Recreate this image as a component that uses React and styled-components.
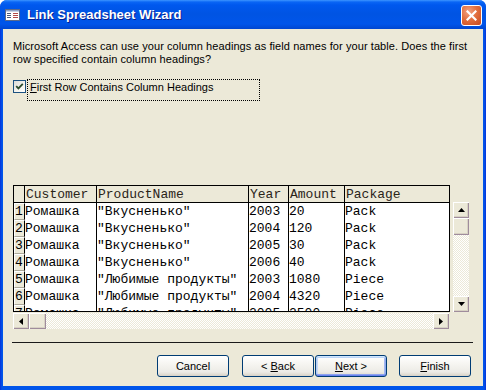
import React from "react";
import styled, { createGlobalStyle } from "styled-components";

const GlobalStyle = createGlobalStyle`
  html, body { margin: 0; padding: 0; background: #ffffff; }
  body { font-family: "Liberation Sans", Arial, sans-serif; }
`;

const Window = styled.div`
  width: 486px;
  height: 390px;
  display: flex;
  flex-direction: column;
  background: linear-gradient(90deg, #0831D9 0px, #0055EA 2px, #0055EA 484px, #0831D9 486px);
  border-radius: 7px 7px 0 0;
  overflow: hidden;
`;

const TitleBar = styled.div`
  height: 29px;
  flex: none;
  display: flex;
  align-items: center;
  padding-left: 5px;
  background: linear-gradient(
    180deg,
    #3D95FF 0px,
    #0A66F5 2px,
    #0058EE 5px,
    #0054E3 14px,
    #0055EA 24px,
    #0046D0 29px
  );
`;

const TitleIcon = styled.svg`
  flex: none;
  margin-top: 1px;
`;

const TitleText = styled.div`
  margin-left: 6px;
  color: #ffffff;
  font: bold 13px "Liberation Sans", Arial, sans-serif;
  text-shadow: 1px 1px 0 #0A1E8C;
  white-space: nowrap;
`;

const CloseBtn = styled.div`
  width: 21px;
  height: 21px;
  box-sizing: border-box;
  margin: 5px 4px 0 auto;
  align-self: flex-start;
  border: 1px solid #ffffff;
  border-radius: 3px;
  background: radial-gradient(circle at 35% 30%, #F2A384 0%, #E2703F 45%, #C8481E 100%);
  display: flex;
  align-items: center;
  justify-content: center;
`;

const Client = styled.div`
  flex: 1;
  margin: 0 3px 4px 3px;
  background: #ECE9D8;
  padding: 11px 12px 0 10px;
  display: flex;
  flex-direction: column;
  font-size: 11px;
  color: #000000;
`;

const Intro = styled.div`
  line-height: 13px;
  white-space: nowrap;
  letter-spacing: 0.08px;
`;

const CheckRow = styled.div`
  margin-top: 13px;
  display: flex;
  align-items: flex-start;
`;

const CheckBox = styled.div`
  width: 13px;
  height: 13px;
  box-sizing: border-box;
  margin-top: 1px;
  border: 1px solid #1C5180;
  background: linear-gradient(135deg, #DCDCD7 0%, #F5F4EF 60%, #FFFFFF 100%);
  display: flex;
  align-items: center;
  justify-content: center;
`;

const FocusLabel = styled.div`
  margin-left: 1px;
  width: 233px;
  height: 22px;
  box-sizing: border-box;
  border: 1px dotted #000000;
  padding: 1px 0 0 2px;
  line-height: 13px;
  white-space: nowrap;
`;

const GridArea = styled.div`
  margin-top: 84px;
  display: flex;
  align-items: flex-start;
`;

const GridColumn = styled.div`
  display: flex;
  flex-direction: column;
`;

const TableBox = styled.div`
  width: 437px;
  height: 127px;
  box-sizing: border-box;
  border: 1px solid #000000;
  background: #ffffff;
  overflow: hidden;
  font: 13px "Liberation Mono", "Courier New", monospace;
`;

const Row = styled.div`
  display: grid;
  grid-template-columns: 11px 72px 152px 40px 56px 1fr;
  height: 17px;
  box-sizing: border-box;
  border-bottom: ${(p) => (p.$header ? "1px solid #000" : "none")};
`;

const Cell = styled.div`
  box-sizing: border-box;
  border-right: ${(p) => (p.$last ? "none" : "1px solid #000")};
  white-space: nowrap;
  overflow: hidden;
  color: ${(p) => (p.$header ? "#2A2418" : "#000")};
  line-height: ${(p) => (p.$header ? "18px" : "17px")};
  padding-left: ${(p) => (p.$header ? "1px" : "0")};
  background: ${(p) => (p.$header ? "#ECE9D8" : "#ffffff")};
`;

const SelectorCell = styled.div`
  box-sizing: border-box;
  border-right: 1px solid #000;
  background: #ECE9D8;
  ${(p) =>
    p.$header
      ? ""
      : `border-top: 1px solid #ffffff; border-left: 1px solid #ffffff; border-bottom: 1px solid #ACA899;`}
  line-height: 15px;
  font-size: 13px;
  overflow: hidden;
  color: #000;
`;

const HScroll = styled.div`
  margin-top: 1px;
  width: 436px;
  height: 16px;
  display: flex;
`;

const VScroll = styled.div`
  margin-left: 3px;
  margin-top: 17px;
  width: 16px;
  height: 110px;
  display: flex;
  flex-direction: column;
`;

const ScrollBtn = styled.div`
  flex: none;
  width: 16px;
  height: 16px;
  box-sizing: border-box;
  background: #ECE9D8;
  box-shadow: inset 1px 1px 0 #ffffff, inset -1px -1px 0 #9F8C9C, inset -2px -2px 0 #D8D2C4;
  display: flex;
  align-items: center;
  justify-content: center;
`;

const Thumb = styled.div`
  flex: none;
  width: ${(p) => (p.$vertical ? "16px" : "17px")};
  height: ${(p) => (p.$vertical ? "17px" : "16px")};
  box-sizing: border-box;
  background: #ECE9D8;
  box-shadow: inset 1px 1px 0 #ffffff, inset -1px -1px 0 #9F8C9C, inset -2px -2px 0 #D8D2C4;
`;

const Track = styled.div`
  flex: 1;
  background: repeating-conic-gradient(#ffffff 0% 25%, #ECE9D8 0% 50%) 0 0 / 2px 2px;
`;

const Separator = styled.div`
  margin-top: 13px;
  margin-left: -1px;
  width: 461px;
  height: 1px;
  background: #1a1a1a;
`;

const ButtonRow = styled.div`
  margin-top: 12px;
  display: flex;
  justify-content: flex-end;
`;

const Button = styled.div`
  width: 72px;
  height: 22px;
  box-sizing: border-box;
  margin-left: ${(p) => p.$gap}px;
  border: 1px solid #003C74;
  border-radius: 3px;
  background: linear-gradient(180deg, #FFFFFF 0%, #F6F5F1 40%, #ECEBE6 80%, #D8D2C6 100%);
  box-shadow: ${(p) =>
    p.$default
      ? "inset 0 1px 0 #CEE7FF, inset 0 -1px 0 #6982EE, inset 1px 0 0 #B4CCF2, inset -1px 0 0 #8EA8EE, inset 0 2px 0 #BCD4F6, inset 0 -2px 0 #8DA3EE, inset 2px 0 0 #C4D8F6, inset -2px 0 0 #A3B8F0"
      : "none"};
  display: flex;
  align-items: center;
  justify-content: center;
  font-size: 11px;
  color: #000;
  white-space: pre;
`;

const Arrow = ({ dir }) => {
  const pts = {
    up: "3.5,0 7,4 0,4",
    down: "0,0 7,0 3.5,4",
    left: "4,0 4,7 0,3.5",
    right: "0,0 4,3.5 0,7",
  }[dir];
  const vertical = dir === "up" || dir === "down";
  return (
    <svg width={vertical ? 7 : 4} height={vertical ? 4 : 7} viewBox={vertical ? "0 0 7 4" : "0 0 4 7"}>
      <polygon points={pts} fill="#000" />
    </svg>
  );
};

const rows = [
  ["1", "Ромашка", "\"Вкусненько\"", "2003", "20", "Pack"],
  ["2", "Ромашка", "\"Вкусненько\"", "2004", "120", "Pack"],
  ["3", "Ромашка", "\"Вкусненько\"", "2005", "30", "Pack"],
  ["4", "Ромашка", "\"Вкусненько\"", "2006", "40", "Pack"],
  ["5", "Ромашка", "\"Любимые продукты\"", "2003", "1080", "Piece"],
  ["6", "Ромашка", "\"Любимые продукты\"", "2004", "4320", "Piece"],
  ["7", "Ромашка", "\"Любимые продукты\"", "2005", "2500", "Piece"],
];

const headers = ["Customer", "ProductName", "Year", "Amount", "Package"];

export default function App() {
  return (
    <>
      <GlobalStyle />
      <Window>
        <TitleBar>
          <TitleIcon width="16" height="14" viewBox="0 0 16 14">
            <rect x="0.5" y="1.5" width="14" height="11" fill="#ffffff" stroke="#5A6A8C" />
            <rect x="1" y="2" width="13" height="1.5" fill="#8FA3C8" />
            <rect x="2" y="5" width="4" height="1" fill="#4A5A7A" />
            <rect x="2" y="7" width="4" height="1" fill="#4A5A7A" />
            <rect x="2" y="9" width="4" height="1" fill="#4A5A7A" />
            <rect x="8" y="5" width="5" height="1" fill="#B24A4A" />
            <rect x="8" y="7" width="5" height="1" fill="#B24A4A" />
            <rect x="8" y="9" width="5" height="1" fill="#B24A4A" />
          </TitleIcon>
          <TitleText>Link Spreadsheet Wizard</TitleText>
          <CloseBtn>
            <svg width="11" height="11" viewBox="0 0 11 11">
              <path d="M1.5 1.5 L9.5 9.5 M9.5 1.5 L1.5 9.5" stroke="#ffffff" strokeWidth="2.2" strokeLinecap="square" />
            </svg>
          </CloseBtn>
        </TitleBar>
        <Client>
          <Intro>
            Microsoft Access can use your column headings as field names for your table. Does the first
            <br />
            row specified contain column headings?
          </Intro>
          <CheckRow>
            <CheckBox>
              <svg width="9" height="9" viewBox="0 0 9 9">
                <path d="M1.2 4.2 L3.4 6.4 L7.8 1.8" stroke="#2B4A2B" strokeWidth="1.8" fill="none" />
              </svg>
            </CheckBox>
            <FocusLabel>
              <u>F</u>irst Row Contains Column Headings
            </FocusLabel>
          </CheckRow>
          <GridArea>
            <GridColumn>
              <TableBox>
                <Row $header>
                  <SelectorCell $header />
                  {headers.map((h, i) => (
                    <Cell key={h} $header $last={i === headers.length - 1}>
                      {h}
                    </Cell>
                  ))}
                </Row>
                {rows.map((r) => (
                  <Row key={r[0]}>
                    <SelectorCell>{r[0]}</SelectorCell>
                    {r.slice(1).map((v, i) => (
                      <Cell key={i} $last={i === 4}>
                        {v}
                      </Cell>
                    ))}
                  </Row>
                ))}
              </TableBox>
              <HScroll>
                <ScrollBtn>
                  <Arrow dir="left" />
                </ScrollBtn>
                <Thumb />
                <Track />
                <ScrollBtn>
                  <Arrow dir="right" />
                </ScrollBtn>
              </HScroll>
            </GridColumn>
            <VScroll>
              <ScrollBtn>
                <Arrow dir="up" />
              </ScrollBtn>
              <Thumb $vertical />
              <Track />
              <ScrollBtn>
                <Arrow dir="down" />
              </ScrollBtn>
            </VScroll>
          </GridArea>
          <Separator />
          <ButtonRow>
            <Button $gap={0}>Cancel</Button>
            <Button $gap={13}>
              {"< "}<u>B</u>{"ack"}
            </Button>
            <Button $gap={1} $default>
              <u>N</u>{"ext >"}
            </Button>
            <Button $gap={12}>
              <u>F</u>{"inish"}
            </Button>
          </ButtonRow>
        </Client>
      </Window>
    </>
  );
}
